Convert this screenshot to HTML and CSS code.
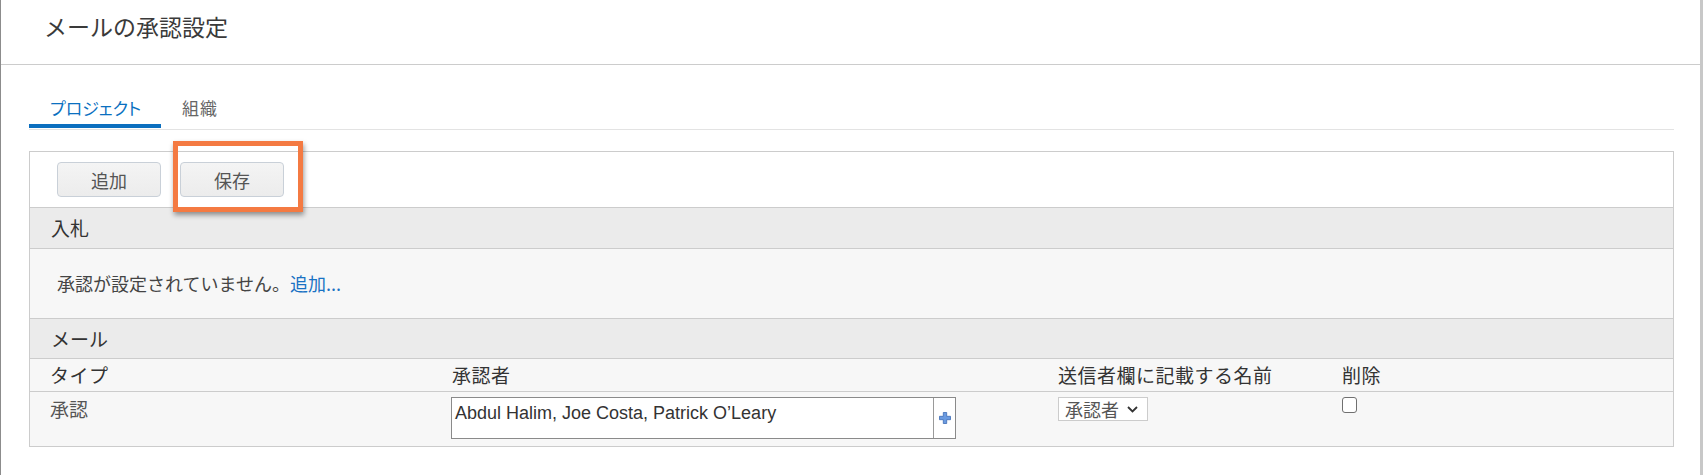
FILE: index.html
```html
<!DOCTYPE html>
<html lang="ja">
<head>
    <meta charset="UTF-8">
    <title>メールの承認設定</title>
    <link rel="stylesheet" href="styles.css">
</head>
<body>
    <div class="dialog">
        <header class="dialog-head">
            <h1 class="dialog-title">メールの承認設定</h1>
        </header>

        <div class="dialog-body">
            <nav class="tabs">
                <a class="tab active">プロジェクト</a>
                <a class="tab">組織</a>
            </nav>

            <section class="panel">
                <div class="toolbar">
                    <button class="btn">追加</button>
                    <span class="btn-wrap">
                        <button class="btn">保存</button>
                        <span class="highlight"></span>
                    </span>
                </div>

                <div class="group-head">入札</div>
                <div class="empty-row">承認が設定されていません。<a class="link">追加...</a></div>

                <div class="group-head group-head-mail">メール</div>
                <div class="grid head-row">
                    <span>タイプ</span>
                    <span>承認者</span>
                    <span>送信者欄に記載する名前</span>
                    <span>削除</span>
                </div>
                <div class="grid data-row">
                    <span class="cell-type">承認</span>
                    <div class="picker">
                        <div class="picker-text">Abdul Halim, Joe Costa, Patrick O’Leary</div>
                        <div class="picker-add">
                            <svg width="12" height="12" viewBox="0 0 12 12">
                                <path d="M4.3 0.5h3.4v3.8h3.8v3.4h-3.8v3.8h-3.4v-3.8h-3.8v-3.4h3.8z" fill="#6b9be0" stroke="#3d6cb5" stroke-width="0.8"/>
                            </svg>
                        </div>
                    </div>
                    <div class="select">
                        <span>承認者</span>
                        <svg width="11" height="7" viewBox="0 0 11 7">
                            <path d="M1 1l4.5 4.5L10 1" fill="none" stroke="#333" stroke-width="1.8"/>
                        </svg>
                    </div>
                    <span class="check"></span>
                </div>
            </section>
        </div>
    </div>
</body>
</html>
```

FILE: styles.css
```css
body {
    margin: 0;
    padding: 0;
    background: #ffffff;
    font-family: "Noto Sans CJK JP", sans-serif;
    font-size: 18px;
    color: #444444;
}
.dialog {
    width: 1703px;
    height: 475px;
    box-sizing: border-box;
    border-left: 1px solid #8c8c8c;
    border-right: 3px solid #c8c8c8;
    background: #ffffff;
    overflow: hidden;
}
.dialog-head {
    height: 64px;
    border-bottom: 1px solid #cccccc;
    box-sizing: content-box;
}
.dialog-title {
    margin: 0;
    padding: 10px 0 0 43px;
    font-size: 23px;
    font-weight: normal;
    line-height: 32px;
    color: #3a3a3a;
}
.dialog-body {
    padding: 24px 26px 0 28px;
}
.tabs {
    display: flex;
    border-bottom: 1px solid #e3e3e3;
}
.tab {
    padding: 2px 21px 0 21px;
    line-height: 33px;
    font-size: 17px;
    letter-spacing: 1px;
    color: #666666;
    border-bottom: 4px solid transparent;
    margin-bottom: 1px;
}
.tab.active {
    width: 132px;
    box-sizing: border-box;
    padding-right: 0;
    letter-spacing: 0;
    font-feature-settings: "palt";
    color: #0a70c0;
    border-bottom-color: #0b6fbf;
}
.panel {
    margin-top: 21px;
    border: 1px solid #cccccc;
}
.toolbar {
    display: flex;
    gap: 19px;
    padding: 10px 0 10px 27px;
    background: #ffffff;
}
.btn {
    width: 104px;
    height: 35px;
    padding: 0;
    font-family: "Noto Sans CJK JP", sans-serif;
    font-size: 18px;
    color: #555555;
    background: linear-gradient(#f4f4f4, #ececec);
    border: 1px solid #c9d0d8;
    border-radius: 4px;
}
.btn-wrap {
    position: relative;
    display: flex;
}
.highlight {
    position: absolute;
    left: -7px;
    top: -21px;
    width: 130px;
    height: 71px;
    box-sizing: border-box;
    border: 5px solid #f47a42;
    box-shadow: 1px 3px 5px rgba(0, 0, 0, 0.4);
}
.group-head {
    height: 40px;
    line-height: 40px;
    padding-left: 21px;
    font-size: 19px;
    background: #ebebeb;
    border-top: 1px solid #cccccc;
    color: #333333;
}
.group-head-mail {
    height: 39px;
    line-height: 39px;
}
.empty-row {
    height: 69px;
    line-height: 69px;
    padding-left: 27px;
    background: #f7f7f7;
    border-top: 1px solid #cccccc;
    color: #444444;
}
.link {
    color: #1a72c4;
}
.grid {
    display: grid;
    grid-template-columns: 402px 606px 284px 1fr;
    padding-left: 20px;
    background: #f7f7f7;
    border-top: 1px solid #cccccc;
}
.head-row {
    height: 32px;
    line-height: 32px;
    font-size: 19px;
    letter-spacing: 0.5px;
    color: #333333;
}
.data-row {
    height: 55px;
    padding-top: 5px;
    box-sizing: border-box;
    align-items: start;
}
.cell-type {
    line-height: 24px;
    font-size: 19px;
    color: #555555;
}
.picker {
    display: flex;
    width: 505px;
    height: 42px;
    box-sizing: border-box;
    margin-left: -1px;
    border: 1px solid #8a8a8a;
    background: #ffffff;
}
.picker-text {
    flex: 1;
    padding: 5px 0 0 3px;
    font-family: "Liberation Sans", "Noto Sans CJK JP", sans-serif;
    font-size: 18px;
    line-height: 20px;
    color: #333333;
    border-right: 1px solid #9a9a9a;
}
.picker-add {
    width: 21px;
    display: flex;
    align-items: center;
    justify-content: center;
}
.select {
    display: flex;
    align-items: center;
    gap: 8px;
    width: 90px;
    height: 24px;
    box-sizing: border-box;
    padding-left: 6px;
    border: 1px solid #cccccc;
    background: #ffffff;
    line-height: 22px;
    color: #555555;
}
.check {
    width: 15px;
    height: 16px;
    box-sizing: border-box;
    border: 1px solid #707070;
    border-radius: 3px;
    background: #ffffff;
}
```
